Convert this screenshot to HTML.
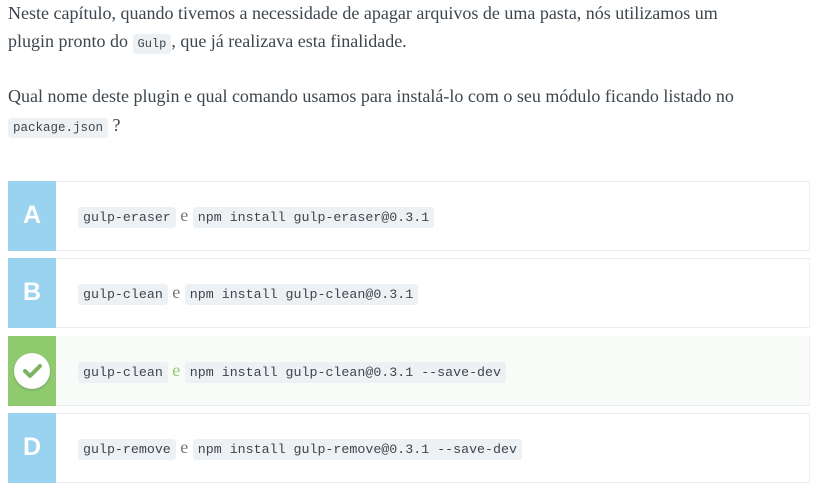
<!DOCTYPE html>
<html><head><meta charset="utf-8"><style>
body{margin:0;background:#fff;width:833px;height:503px;overflow:hidden;font-family:"Liberation Serif",serif;color:#3d464d;font-size:18px}
p{margin:0;position:absolute;left:8px;white-space:nowrap}
code{font-family:"Liberation Mono",monospace;font-size:13.3px;background:#eef1f4;border-radius:3px;padding:3px 5px;color:#3d464d}
.row{position:absolute;left:8px;width:801px;height:68px;border-top:1px solid #e8ecee;border-bottom:1px solid #e8ecee;border-right:1px solid #eef0f1;background:#fff}
.lt{position:absolute;left:0;top:-1px;width:48px;height:70px;background:#9ad3f0;color:#fff;font-family:"Liberation Sans",sans-serif;font-weight:bold;font-size:25px;text-align:center;line-height:68px}
.ans{position:absolute;left:70px;top:23px;white-space:nowrap;color:#777;font-size:18px}
</style></head><body>
<p style="top:3px">Neste capítulo, quando tivemos a necessidade de apagar arquivos de uma pasta, nós utilizamos um</p>
<p style="top:31px">plugin pronto do <code style="font-size:12px">Gulp</code>, que já realizava esta finalidade.</p>
<p style="top:86px">Qual nome deste plugin e qual comando usamos para instalá-lo com o seu módulo ficando listado no</p>
<p style="top:115px"><code style="font-size:12.5px">package.json</code> ?</p>

<div class="row" style="top:181px"><div class="lt">A</div><div class="ans"><code>gulp-eraser</code> e <code>npm install gulp-eraser@0.3.1</code></div></div>
<div class="row" style="top:258px"><div class="lt">B</div><div class="ans"><code>gulp-clean</code> e <code>npm install gulp-clean@0.3.1</code></div></div>
<div class="row" style="top:336px;background:#f9fbf8;border-top-color:#f9fbf8"><div class="lt" style="background:#8fca6f"><div style="position:absolute;left:6px;top:17px;width:36px;height:36px;border-radius:50%;background:#fff;box-shadow:0 1px 2px rgba(0,0,0,.2)"><svg width="36" height="36" viewBox="0 0 36 36" style="display:block"><path d="M11 18l5 5 10-10" fill="none" stroke="#7bb363" stroke-width="4" stroke-linecap="round" stroke-linejoin="round"/></svg></div></div><div class="ans"><code>gulp-clean</code> <span style="color:#8fca6f">e</span> <code>npm install gulp-clean@0.3.1 --save-dev</code></div></div>
<div class="row" style="top:413px"><div class="lt">D</div><div class="ans"><code>gulp-remove</code> e <code>npm install gulp-remove@0.3.1 --save-dev</code></div></div>
</body></html>
